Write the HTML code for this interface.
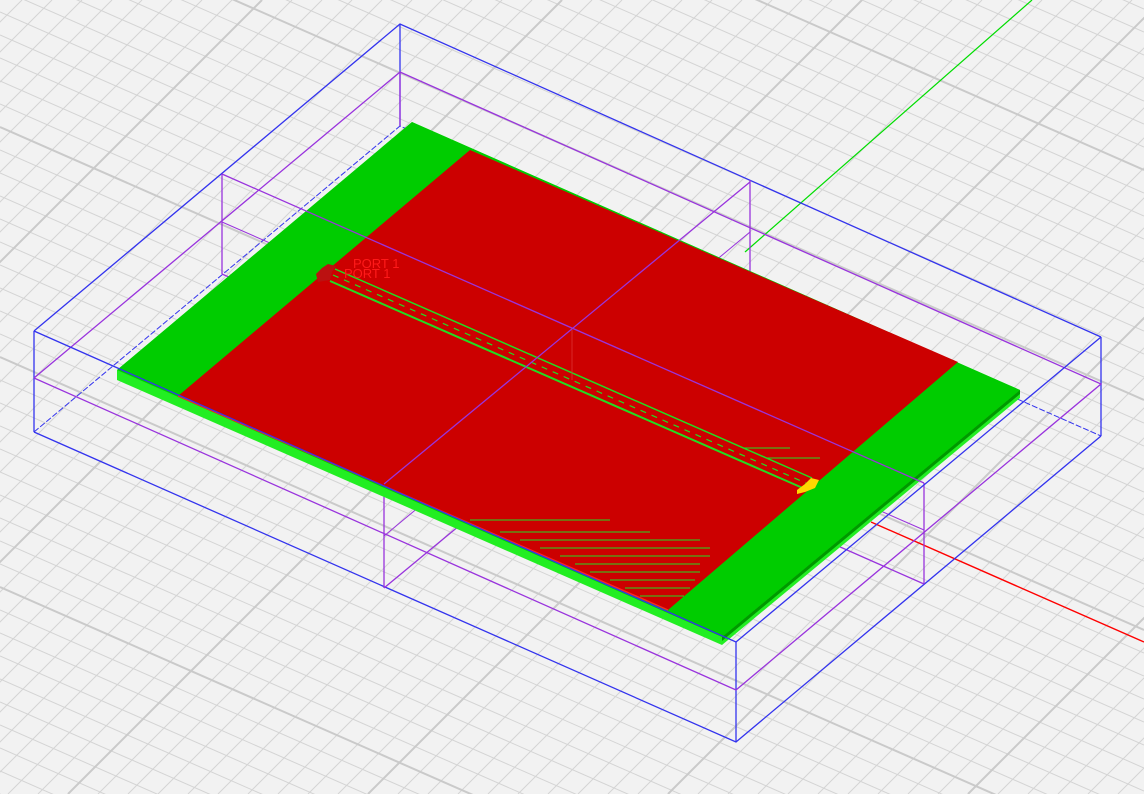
<!DOCTYPE html>
<html><head><meta charset="utf-8"><style>
html,body{margin:0;padding:0;background:#f2f2f2;overflow:hidden;width:1144px;height:794px}
svg{display:block;position:absolute;left:0;top:0}
</style></head><body>
<svg width="1144" height="794" viewBox="0 0 1144 794" xmlns="http://www.w3.org/2000/svg">
<rect width="1144" height="794" fill="#f2f2f2"/>
<g fill="none" stroke="#d4d4d4" stroke-width="1">
<path d="M0,-517
l1144,503m-1144,-480l1144,503m-1144,-480l1144,503m-1144,-480l1144,503m-1144,-480l1144,503m-1144,-480l1144,503m-1144,-480l1144,503m-1144,-480l1144,503m-1144,-480l1144,503m-1144,-480l1144,503m-1144,-480
l1144,503m-1144,-480l1144,503m-1144,-480l1144,503m-1144,-480l1144,503m-1144,-480l1144,503m-1144,-480l1144,503m-1144,-480l1144,503m-1144,-480l1144,503m-1144,-480l1144,503m-1144,-480l1144,503m-1144,-480
l1144,503m-1144,-480l1144,503m-1144,-480l1144,503m-1144,-480l1144,503m-1144,-480l1144,503m-1144,-480l1144,503m-1144,-480l1144,503m-1144,-480l1144,503m-1144,-480l1144,503m-1144,-480l1144,503m-1144,-480
l1144,503m-1144,-480l1144,503m-1144,-480l1144,503m-1144,-480l1144,503m-1144,-480l1144,503m-1144,-480l1144,503m-1144,-480l1144,503m-1144,-480l1144,503m-1144,-480l1144,503m-1144,-480l1144,503m-1144,-480
l1144,503m-1144,-480l1144,503m-1144,-480l1144,503m-1144,-480l1144,503m-1144,-480l1144,503m-1144,-480l1144,503m-1144,-480l1144,503m-1144,-480l1144,503m-1144,-480l1144,503m-1144,-480l1144,503m-1144,-480
l1144,503m-1144,-480l1144,503m-1144,-480l1144,503m-1144,-480l1144,503m-1144,-480l1144,503m-1144,-480l1144,503m-1144,-480l1144,503m-1144,-480l1144,503m-1144,-480"/>
<path d="M-8,0
l-794,794m824,-794l-794,794m824,-794l-794,794m824,-794l-794,794m824,-794l-794,794m824,-794l-794,794m824,-794l-794,794m824,-794l-794,794m824,-794l-794,794m824,-794l-794,794m824,-794
l-794,794m824,-794l-794,794m824,-794l-794,794m824,-794l-794,794m824,-794l-794,794m824,-794l-794,794m824,-794l-794,794m824,-794l-794,794m824,-794l-794,794m824,-794l-794,794m824,-794
l-794,794m824,-794l-794,794m824,-794l-794,794m824,-794l-794,794m824,-794l-794,794m824,-794l-794,794m824,-794l-794,794m824,-794l-794,794m824,-794l-794,794m824,-794l-794,794m824,-794
l-794,794m824,-794l-794,794m824,-794l-794,794m824,-794l-794,794m824,-794l-794,794m824,-794l-794,794m824,-794l-794,794m824,-794l-794,794m824,-794l-794,794m824,-794l-794,794m824,-794
l-794,794m824,-794l-794,794m824,-794l-794,794m824,-794l-794,794m824,-794l-794,794m824,-794l-794,794m824,-794l-794,794m824,-794l-794,794m824,-794l-794,794m824,-794l-794,794m824,-794
l-794,794m824,-794l-794,794m824,-794l-794,794m824,-794l-794,794m824,-794l-794,794m824,-794l-794,794m824,-794l-794,794m824,-794l-794,794m824,-794l-794,794m824,-794l-794,794m824,-794
l-794,794m824,-794l-794,794m824,-794l-794,794m824,-794l-794,794m824,-794l-794,794m824,-794l-794,794m824,-794"/>
</g>
<g fill="none" stroke="#cacaca" stroke-width="2">
<path d="M0,-333l1144,503M0,-103l1144,503M0,127l1144,503M0,357l1144,503M0,587l1144,503"/>
<path d="M262,0l-794,794M562,0l-794,794M862,0l-794,794M1162,0l-794,794M1462,0l-794,794M1762,0l-794,794"/>
</g>

<line x1="745" y1="252" x2="1032" y2="0" stroke="#00dd00" stroke-width="1.2"/>
<line x1="871" y1="522" x2="1144" y2="642" stroke="#ff0000" stroke-width="1.4"/>

<g stroke="#3333ee" stroke-width="1.3" fill="none">
<polyline points="34,331 400,24 1101,337"/>
<line x1="400" y1="24" x2="400" y2="126"/>
<polyline points="34,432 400,126 1101,436" stroke-dasharray="6,2" stroke-width="1"/>
<polyline points="34,432 736,742 1101,436"/>
<line x1="34" y1="331" x2="34" y2="432"/>
<line x1="1101" y1="337" x2="1101" y2="436"/>
<line x1="736" y1="642" x2="736" y2="742"/>
</g>
<g stroke="#9933dd" stroke-width="1.3" fill="none">
<polyline points="34,378 400,72 1101,384 736,690 34,378"/>
<line x1="400" y1="72" x2="400" y2="126"/>
<line x1="222" y1="174" x2="222" y2="274"/>
<line x1="750" y1="180" x2="750" y2="285"/>
<line x1="924" y1="483" x2="924" y2="584"/>
<line x1="384" y1="484" x2="384" y2="588"/>
<line x1="222" y1="222" x2="924" y2="530" stroke-width="1"/>
<line x1="222" y1="274" x2="924" y2="584"/>
<line x1="750" y1="285" x2="384" y2="588"/>
<line x1="750" y1="232" x2="384" y2="536" stroke-width="1"/>
</g>

<polygon points="117,370 412,122 1020,390 1020,398 722,645 117,380" fill="#22ee22"/>
<polygon points="117,370 412,122 1020,390 722,637" fill="#00cc00"/>
<polygon points="722,637 1020,390 1020,394 722,641" fill="#009900"/>
<polygon points="470,150 958,362 668,610 178,396" fill="#cc0000"/>
<line x1="178" y1="396" x2="668" y2="610" stroke="#ff2222" stroke-width="1.5"/>
<g stroke="#22dd22" stroke-width="1">
<line x1="470" y1="520" x2="610" y2="520"/><line x1="500" y1="532" x2="650" y2="532"/>
<line x1="520" y1="540" x2="700" y2="540"/><line x1="540" y1="548" x2="710" y2="548"/>
<line x1="560" y1="556" x2="710" y2="556"/><line x1="575" y1="564" x2="700" y2="564"/>
<line x1="590" y1="572" x2="700" y2="572"/><line x1="610" y1="580" x2="695" y2="580"/>
<line x1="625" y1="588" x2="690" y2="588"/><line x1="640" y1="596" x2="684" y2="596"/>
<line x1="720" y1="448" x2="790" y2="448"/><line x1="745" y1="458" x2="820" y2="458"/>
</g>

<polygon points="335,269 812,478 805,489 330,281" fill="#cc0000"/>
<line x1="335" y1="269" x2="812" y2="478" stroke="#22dd22" stroke-width="1.5"/>
<line x1="330" y1="281" x2="805" y2="489" stroke="#22dd22" stroke-width="2"/>
<line x1="333" y1="275" x2="808" y2="484" stroke="#22dd22" stroke-width="1.2" stroke-dasharray="6,6"/>

<g stroke="#3333ee" stroke-width="1.3" fill="none">
<polyline points="34,331 736,642 1101,337"/>
</g>
<g stroke="#9933dd" stroke-width="1.3" fill="none">
<line x1="222" y1="174" x2="924" y2="483"/>
<line x1="750" y1="182" x2="384" y2="484"/>
<line x1="572" y1="330" x2="572" y2="380" stroke-width="0.8" stroke="#dd3333"/>
</g>

<path d="M322,268 l6,-4 8,2 -4,6 -2,8 -12,2 -2,-8z" fill="#bb1111"/>
<path d="M797,490 l8,-6 6,-6 8,2 -4,8 -10,4 -8,2z" fill="#ffd700"/>
<text x="353" y="268" font-family="Liberation Sans,sans-serif" font-size="13" fill="#ff1a1a">PORT 1</text>
<text x="344" y="278" font-family="Liberation Sans,sans-serif" font-size="13" fill="#ff1a1a">PORT 1</text>
</svg>
</body></html>
